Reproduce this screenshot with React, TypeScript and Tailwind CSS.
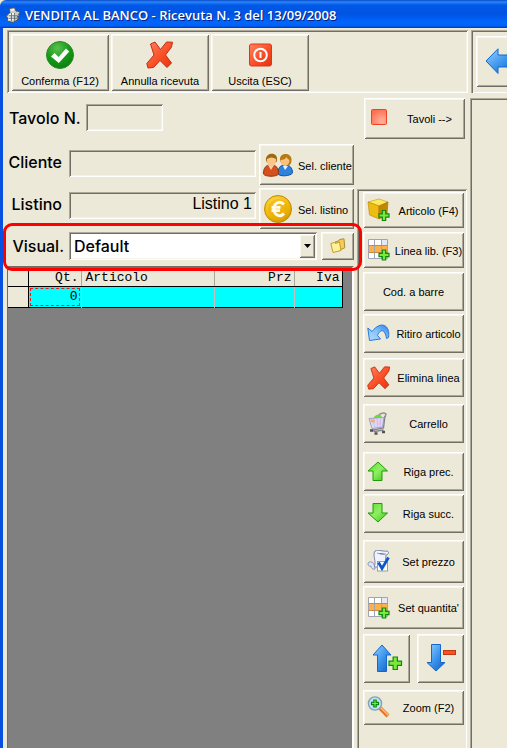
import type { ReactNode } from 'react'

const RAISED =
  'bg-[#ece9d8] shadow-[inset_1px_1px_0_#ffffff,inset_-1px_-1px_0_#716f64,inset_2px_2px_0_#f7f5ee,inset_-2px_-2px_0_#aca899]'
const SUNKEN =
  'shadow-[inset_1px_1px_0_#aca899,inset_-1px_-1px_0_#ffffff,inset_2px_2px_0_#716f64,inset_-2px_-2px_0_#f4f2e8]'
const SMALL = "font-['Liberation_Sans',sans-serif] text-[11px] leading-4"
const FIELD_LABEL = "font-['Inter','Liberation_Sans',sans-serif] text-[16px] leading-5 font-medium text-black"

function Gradients() {
  return (
    <svg className="absolute size-0" aria-hidden="true">
      <defs>
        <radialGradient id="green" cx="0.4" cy="0.25" r="0.8">
          <stop offset="0" stopColor="#5cc052" />
          <stop offset="0.55" stopColor="#169a16" />
          <stop offset="1" stopColor="#0a7d12" />
        </radialGradient>
        <linearGradient id="red" x1="0" y1="0" x2="1" y2="1">
          <stop offset="0" stopColor="#ff8460" />
          <stop offset="0.6" stopColor="#f84a22" />
          <stop offset="1" stopColor="#e03410" />
        </linearGradient>
        <linearGradient id="lime" x1="0" y1="0" x2="1" y2="1">
          <stop offset="0" stopColor="#5fdc30" />
          <stop offset="0.5" stopColor="#8cf060" />
          <stop offset="1" stopColor="#38c010" />
        </linearGradient>
        <linearGradient id="blue" x1="0" y1="0" x2="1" y2="1">
          <stop offset="0" stopColor="#9bd4ff" />
          <stop offset="0.5" stopColor="#3d96ee" />
          <stop offset="1" stopColor="#1258c0" />
        </linearGradient>
        <linearGradient id="sky" x1="0" y1="1" x2="1" y2="0">
          <stop offset="0" stopColor="#b4dcff" />
          <stop offset="0.5" stopColor="#84c4fc" />
          <stop offset="1" stopColor="#2c80e4" />
        </linearGradient>
        <radialGradient id="gold" cx="0.4" cy="0.3" r="0.8">
          <stop offset="0" stopColor="#ffdc50" />
          <stop offset="0.6" stopColor="#f2b90c" />
          <stop offset="1" stopColor="#c88a00" />
        </radialGradient>
        <radialGradient id="square" cx="0.7" cy="0.8" r="0.9">
          <stop offset="0" stopColor="#ffb49a" />
          <stop offset="1" stopColor="#ff6a4c" />
        </radialGradient>
      </defs>
    </svg>
  )
}

function Plus({ x, y, s = 10 }: { x: number; y: number; s?: number }) {
  const a = s * 0.33
  const b = s * 0.67
  return (
    <path
      transform={`translate(${x} ${y})`}
      d={`M${a} 0H${b}V${a}H${s}V${b}H${b}V${s}H${a}V${b}H0V${a}H${a}Z`}
      fill="#7ce83c"
      stroke="#0c8a10"
      strokeWidth="1.2"
    />
  )
}

function CheckIcon() {
  return (
    <svg width="28" height="28" viewBox="0 0 28 28">
      <circle cx="14" cy="14" r="13.5" fill="url(#green)" stroke="#2f8a2c" />
      <path d="M5 15.5 8.5 12l4 4L20 7.5l3.3 3L12.8 22Z" fill="#fff" />
    </svg>
  )
}

function CrossIcon({ size }: { size: number }) {
  return (
    <svg width={size} height={size} viewBox="0 0 28 28">
      <path
        d="M4.500 3 9 1l5.500 7.500L20.500 1 26.500 1.200 25.500 6 19.500 14l6 8-4.500 4.500-7-7L7.500 26.500 2 27 .8 22.500 8 14Z"
        fill="url(#red)"
        stroke="#c42c10"
        strokeLinejoin="round"
      />
    </svg>
  )
}

function PowerIcon() {
  return (
    <svg width="28" height="28" viewBox="0 0 28 28">
      <rect x="3.5" y="3" width="22" height="22" rx="2" fill="url(#red)" stroke="#d8391c" />
      <circle cx="14.5" cy="14" r="6.3" fill="none" stroke="#fff" strokeWidth="2" />
      <path d="M14.5 11v6" stroke="#fff" strokeWidth="2" />
    </svg>
  )
}

function UsersIcon() {
  return (
    <svg width="30" height="24" viewBox="0 0 30 24">
      <path d="M15 21c0-6 2-9 7-9s7.500 3 7.500 8c-2 3-12 4-14.500 1Z" fill="#2f82dc" stroke="#0d4f9e" />
      <path d="m20 13 2 4 3-4Z" fill="#e8f3ff" />
      <path d="M17 7c-1-8 12-8 11.500 0 0 3-1 4.500-3 5.500h-4c-3-1-4-3-4.500-5.500Z" fill="#b87a10" />
      <path d="M17.500 7c3 0 5-1 6-3 1 2 2 2 3 3 0 3-2 6-4.500 6s-4.500-3-4.500-6Z" fill="#fbc180" />
      <path d="M.5 21c0-6 2-9 7.500-9s7.500 3 7.500 9c-2 3-13 3-15 0Z" fill="#d4501c" stroke="#9a3408" />
      <path d="m5 12 3 5 3-5Z" fill="#fbd0a0" />
      <path d="M3 7.500c-1-8.500 12-9 11-1 0 1 0 2-1 3H4Z" fill="#9a6a10" />
      <path d="M4 6c3-2 6-2 9 0 .5 4-2 7.500-4.500 7.500S3.500 10 4 6Z" fill="#fdc58a" />
    </svg>
  )
}

function EuroIcon() {
  return (
    <svg width="28" height="28" viewBox="0 0 28 28">
      <circle cx="14" cy="14" r="13.500" fill="url(#gold)" stroke="#c48c00" />
      <circle cx="14" cy="14" r="10" fill="#e8a800" opacity="0.5" />
      <path
        d="M20 9.500c-4-4.500-10-1.500-10 4.500s6 9 10 4.500M7.500 12.300h9M7.500 15.700h8.500"
        fill="none"
        stroke="#fffbe8"
        strokeWidth="2.800"
      />
    </svg>
  )
}

function FolderIcon() {
  return (
    <svg width="16" height="16" viewBox="0 0 16 16">
      <path d="M5 4 8.500 3l1-1.500L14 .8l.8 9L7 13Z" fill="#f4cc58" stroke="#b08c30" />
      <path d="M.8 5.500 4.500 4.500l1 1 4-1.500L11 12.500 3 14.500Z" fill="#fff09a" stroke="#c89c2c" />
    </svg>
  )
}

function SquareIcon() {
  return (
    <svg width="24" height="24" viewBox="0 0 24 24">
      <rect x="3.500" y="2.500" width="15" height="15" rx="1" fill="url(#square)" stroke="#ee4426" />
    </svg>
  )
}

function BoxIcon() {
  return (
    <svg width="24" height="24" viewBox="0 0 24 24">
      <path d="M1 4 12 1l9 3-9 4Z" fill="#ffe860" stroke="#c89a00" strokeWidth="0.600" />
      <path d="M1 4l11 4v13L2.500 17Z" fill="#eebc10" stroke="#b88600" strokeWidth="0.600" />
      <path d="M21 4 12 8v13l8-4Z" fill="#c08800" stroke="#a87600" strokeWidth="0.600" />
      <Plus x={12} y={12.5} />
    </svg>
  )
}

function GridIcon() {
  return (
    <svg width="24" height="24" viewBox="0 0 24 24">
      <rect x="1.500" y="1.500" width="19" height="19" fill="#fff" />
      <rect x="14" y="1.500" width="6.500" height="19" fill="#e4e8f8" />
      <rect x="1.500" y="7.500" width="19" height="6.500" fill="#fbb24a" />
      <path d="M1.500 1.500h19v19h-19ZM7.500 1.500v19M14.500 1.500v19" fill="none" stroke="#a0a4b4" />
      <path d="M1.500 7.500h19M1.500 14.500h19" stroke="#c48c4c" />
      <Plus x={12} y={12} />
    </svg>
  )
}

function UndoIcon() {
  return (
    <svg width="24" height="24" viewBox="0 0 24 24">
      <path
        d="M.8 6 2.500 18.500 13.500 17 10.500 13.500C13 7 18 6.500 19.500 16.500L21.500 15.500C23.500 3 14-2 5 9.500Z"
        fill="url(#sky)"
        stroke="#2878d8"
        strokeLinejoin="round"
      />
    </svg>
  )
}

function CartIcon() {
  return (
    <svg width="24" height="24" viewBox="0 0 24 24">
      <path d="M7 5c3-4 8-3 8 1v3H7Z" fill="#6cd848" />
      <path d="M12 3c1-2 5-2.500 7-1l-1 3" fill="none" stroke="#909098" strokeWidth="1.500" />
      <path d="M2 6.500 17 5.500 15.500 15 5 16.500Z" fill="#dcdcfa" stroke="#a0a0d0" />
      <path d="M3 7.500h5v3H4Z" fill="#f4b078" />
      <path d="M10 8h4v5h-4Z" fill="#f4c8e0" />
      <path d="m6 6.500 2 9.500M10 6l.5 9.500M14 6l-1 9" stroke="#b8b4e8" strokeWidth="0.700" />
      <path d="M18 4 16.500 16l-11 2 2 1.500 9-1.500" fill="none" stroke="#84848c" strokeWidth="1.300" />
      <path d="M3 18.500h3M7.500 21.500h3M15 20h3" stroke="#505058" strokeWidth="2.600" />
    </svg>
  )
}

function GreenArrow({ down }: { down?: boolean }) {
  return (
    <svg width="24" height="24" viewBox="0 0 24 24">
      <path
        d={down ? 'M6 1.500h9v9.500h5.500L11 20 1 11h5Z' : 'M6 20.500h9V11h5.500L11 2 1 11h5Z'}
        fill="url(#lime)"
        stroke="#1c9c08"
      />
    </svg>
  )
}

function PriceIcon() {
  return (
    <svg width="24" height="24" viewBox="0 0 24 24">
      <path d="M8 1c3-2 9 1 12 0 3 1 1 4-1 4l-1 12H7C10 11 5 6 8 1Z" fill="#f0f2fc" stroke="#7c84a4" />
      <path d="M1 13c2-2 5-1 6 1l1 5c-2 1-4-1-4-3-2 1-3-1-3-3Z" fill="#dfe4f8" stroke="#8890b4" />
      <path d="M10 3c3 1 6 2 9 1" stroke="#a0a8c8" />
      <rect x="10.500" y="11.500" width="10" height="9.500" fill="#fff" stroke="#a09c98" />
      <path d="m11.500 12.500 3.500 6 6.500-11" fill="none" stroke="#0c58c8" strokeWidth="2.800" />
    </svg>
  )
}

function QtyUpIcon() {
  return (
    <svg width="32" height="32" viewBox="0 0 32 32">
      <path d="M6.500 28.500V12H2l9-10 9 10h-4.500v16.500Z" fill="url(#blue)" stroke="#1468cc" />
      <Plus x={18} y={14} s={12.5} />
    </svg>
  )
}

function QtyDownIcon() {
  return (
    <svg width="32" height="32" viewBox="0 0 32 32">
      <path d="M6.500 1.500V19.500H2L11 28l9-8.500h-4.500V1.500Z" fill="url(#blue)" stroke="#1468cc" />
      <rect x="18.500" y="7.500" width="12" height="4" fill="#fb5020" stroke="#c03810" />
    </svg>
  )
}

function ZoomIcon() {
  return (
    <svg width="24" height="24" viewBox="0 0 24 24">
      <path d="m13 12 8 8" stroke="#e87424" strokeWidth="4" />
      <path d="m13.500 11.500 8 8" stroke="#ffc490" strokeWidth="1.300" />
      <circle cx="8" cy="7.500" r="6.600" fill="#bce4fc" stroke="#88a0b4" strokeWidth="1.400" />
      <Plus x={4.5} y={4} s={7} />
    </svg>
  )
}

function BackArrowIcon() {
  return (
    <svg width="34" height="28" viewBox="0 0 34 28" className="shrink-0">
      <path d="M1 13 13 .8V7h20v12H13v6.500Z" fill="url(#blue)" stroke="#1468cc" />
    </svg>
  )
}

function RegisterIcon() {
  return (
    <svg width="16" height="16" viewBox="0 0 16 16">
      <path d="M4 1.500 9.500.5 11 4l3.500.5.5 2-1.500.5 1 1.500-2 1 1 2-2 2L8 15.500 2 14l1-3-2-1 2-3 2-1Z" fill="#c4ccc8" stroke="#48545c" />
      <path d="M5.500 2.500 9 2l.5 1.500-3.500.5Z" fill="#f4f8f4" />
      <path d="M4 7.500h2M3.500 10h2M3.500 12.500h2M7 7h2M7 10h1.500M7 12.500h1.500" stroke="#fff" strokeWidth="1.500" />
      <path d="M6.500 6v8M9.500 6v8M4 8.800h9M4 11.300h9" stroke="#5c6870" strokeWidth="0.800" />
    </svg>
  )
}

function TopButton({ icon, children }: { icon: ReactNode; children: ReactNode }) {
  return (
    <button type="button" className={`flex h-[57px] w-[98px] flex-col items-center gap-1 pt-[7px] ${SMALL} ${RAISED}`}>
      {icon}
      {children}
    </button>
  )
}

function ToolButton({ icon, className, children }: { icon?: ReactNode; className: string; children: ReactNode }) {
  return (
    <button type="button" className={`flex w-[101px] shrink-0 items-center pl-1 whitespace-nowrap ${SMALL} ${RAISED} ${className}`}>
      {icon}
      <span className={icon ? 'flex-1 pt-px pl-[2px] text-center' : 'flex-1 pr-1 text-center'}>{children}</span>
    </button>
  )
}

function SelButton({ icon, children }: { icon: ReactNode; children: ReactNode }) {
  return (
    <button type="button" className={`ml-[3px] h-[41px] w-[95px] shrink-0 p-[2px] ${SMALL} ${RAISED}`}>
      <span className="flex items-center gap-[5px] pl-[2px] whitespace-nowrap">
        <span className="flex w-[30px] shrink-0 justify-center">{icon}</span>
        <span className="pt-[2px]">{children}</span>
      </span>
    </button>
  )
}

const columns = [
  { name: 'Qt.', className: 'w-[53px] text-right' },
  { name: 'Articolo', className: 'w-[133px] text-left' },
  { name: 'Prz', className: 'w-[80px] text-right' },
  { name: 'Iva', className: 'w-[48px] text-right' },
]

export default function App() {
  return (
    <div className="flex min-h-screen flex-col overflow-hidden bg-[#ece9d8] text-black">
      <Gradients />
      <header className="flex h-7 items-center gap-1 rounded-tl-md bg-[linear-gradient(#0a48c8_0%,#2a86f8_7%,#0058e6_18%,#0054e3_50%,#0066ff_82%,#0062f5_92%,#0038b8_100%)] pt-[2px] pl-[5px]">
        <RegisterIcon />
        <h1 className="font-['Open_Sans',sans-serif] text-[13px] leading-4 font-semibold whitespace-nowrap text-white [text-shadow:1px_1px_0_#0a1f7a]">
          VENDITA AL BANCO - Ricevuta N. 3 del 13/09/2008
        </h1>
      </header>

      <div className="flex flex-1 border-l-3 border-[#0a50e0] pt-[2px]">
        <main className="flex w-[465px] shrink-0 flex-col pl-1">
          <div className={`flex h-[63px] gap-[2px] pt-1 pl-1 ${SUNKEN}`}>
            <TopButton icon={<CheckIcon />}>Conferma (F12)</TopButton>
            <TopButton icon={<CrossIcon size={28} />}>Annulla ricevuta</TopButton>
            <TopButton icon={<PowerIcon />}>Uscita (ESC)</TopButton>
          </div>

          <div className="flex flex-1 pt-1">
            <section className="flex min-w-0 flex-1 flex-col gap-[3px] pr-[3px]">
              <div className="flex h-11 items-start pt-[7px]">
                <label htmlFor="tavolo" className={`w-[79px] shrink-0 pt-1 pl-[2px] whitespace-nowrap ${FIELD_LABEL}`}>
                  Tavolo N.
                </label>
                <input id="tavolo" className={`h-[27px] w-[77px] px-1 ${SUNKEN}`} />
              </div>
              <div className="flex items-start">
                <label htmlFor="cliente" className={`mr-[7px] w-[55px] shrink-0 pt-2 text-right ${FIELD_LABEL}`}>
                  Cliente
                </label>
                <input id="cliente" className={`mt-[6px] h-[27px] min-w-0 flex-1 px-1 ${SUNKEN}`} />
                <SelButton icon={<UsersIcon />}>Sel. cliente</SelButton>
              </div>
              <div className="flex items-start">
                <label htmlFor="listino" className={`mr-[7px] w-[55px] shrink-0 pt-[6px] text-right ${FIELD_LABEL}`}>
                  Listino
                </label>
                <input
                  id="listino"
                  defaultValue="Listino 1"
                  className={`mt-1 h-[27px] min-w-0 flex-1 px-1 pb-[3px] text-right font-['Liberation_Sans',sans-serif] text-[16px] leading-5 ${SUNKEN}`}
                />
                <SelButton icon={<EuroIcon />}>Sel. listino</SelButton>
              </div>
              <div className="relative flex h-7 items-center">
                <label htmlFor="visual" className={`mr-[5px] w-[57px] shrink-0 text-right ${FIELD_LABEL}`}>
                  Visual.
                </label>
                <div className="relative h-7 min-w-0 flex-1">
                  <select
                    id="visual"
                    className={`h-7 w-full appearance-none bg-white pl-[5px] font-['Inter','Liberation_Sans',sans-serif] text-[16px] leading-5 font-medium ${SUNKEN}`}
                  >
                    <option>Default</option>
                  </select>
                  <span className={`pointer-events-none absolute inset-y-[2px] right-[2px] flex w-4 items-center justify-center ${RAISED}`}>
                    <svg width="7" height="4" viewBox="0 0 7 4">
                      <path d="M0 0h7L3.500 4Z" />
                    </svg>
                  </span>
                </div>
                <button type="button" aria-label="Apri" className={`ml-1 flex h-7 w-[33px] items-center justify-center ${RAISED}`}>
                  <FolderIcon />
                </button>
                <div className="pointer-events-none absolute -top-[9px] -right-2 -bottom-[11px] -left-1 z-10 rounded-[9px] border-3 border-[#fe0000]" />
              </div>

              <div className="mt-[3px] flex-1 border-t-2 border-r-2 border-l border-t-[#716f64] border-r-white border-l-[#716f64] bg-[#808080] pt-[2px]">
                <table className="w-[334px] table-fixed border-collapse border-r border-b border-black font-['Liberation_Mono',monospace] text-[13px] leading-4">
                  <thead>
                    <tr className="h-4 bg-[#ece9d8]">
                      <th className="w-[20px] border-r border-b border-black" />
                      {columns.map((c) => (
                        <th key={c.name} className={`border-r border-b border-r-[#aca899] border-b-black py-0 pr-[2px] pl-1 font-normal last:border-r-black ${c.className}`}>
                          {c.name}
                        </th>
                      ))}
                    </tr>
                  </thead>
                  <tbody>
                    <tr className="h-5 bg-[#00ffff]">
                      <td className="border-r border-black bg-[#ece9d8]" />
                      <td className="border-r border-r-[#c0c0c0] p-px text-right">
                        <div className="h-[18px] border border-dashed border-[#f01818] pr-px">0</div>
                      </td>
                      <td className="border-r border-r-[#c0c0c0]" />
                      <td className="border-r border-r-[#c0c0c0]" />
                      <td />
                    </tr>
                  </tbody>
                </table>
              </div>
            </section>

            <aside className="flex w-[111px] shrink-0 flex-col">
              <ToolButton icon={<SquareIcon />} className="mt-px ml-[7px] h-[41px]">Tavoli --&gt;</ToolButton>
              <nav className="mt-[50px] flex w-[110px] flex-1 flex-col pt-[3px] pb-[23px] pl-[6px] shadow-[inset_1px_1px_0_#aca899,inset_-1px_0_0_#ffffff,inset_2px_2px_0_#716f64]">
                <ToolButton icon={<BoxIcon />} className="h-9">Articolo (F4)</ToolButton>
                <ToolButton icon={<GridIcon />} className="mt-1 h-9">Linea lib. (F3)</ToolButton>
                <ToolButton className="mt-1 h-[39px]">Cod. a barre</ToolButton>
                <ToolButton icon={<UndoIcon />} className="mt-[3px] h-[39px]">Ritiro articolo</ToolButton>
                <ToolButton icon={<CrossIcon size={24} />} className="mt-[5px] h-[39px]">Elimina linea</ToolButton>
                <ToolButton icon={<CartIcon />} className="mt-[7px] h-[39px]">Carrello</ToolButton>
                <ToolButton icon={<GreenArrow />} className="mt-[9px] h-[39px]">Riga prec.</ToolButton>
                <ToolButton icon={<GreenArrow down />} className="mt-[3px] h-[39px]">Riga succ.</ToolButton>
                <ToolButton icon={<PriceIcon />} className="mt-[7px] h-[43px]">Set prezzo</ToolButton>
                <ToolButton icon={<GridIcon />} className="mt-[3px] h-[43px]">Set quantita'</ToolButton>
                <div className="mt-[5px] flex gap-[7px]">
                  <button type="button" aria-label="Aumenta" className={`flex h-[49px] w-[47px] items-center justify-center ${RAISED}`}>
                    <QtyUpIcon />
                  </button>
                  <button type="button" aria-label="Diminuisci" className={`flex h-[49px] w-[47px] items-center justify-center ${RAISED}`}>
                    <QtyDownIcon />
                  </button>
                </div>
                <ToolButton icon={<ZoomIcon />} className="mt-[7px] h-[35px]">Zoom (F2)</ToolButton>
              </nav>
            </aside>
          </div>
        </main>

        <section className="flex min-w-0 flex-1 flex-col overflow-hidden pl-[2px]">
          <div className="ml-px h-[63px] overflow-hidden pt-[6px] pl-[5px] shadow-[inset_1px_1px_0_#aca899,inset_2px_2px_0_#716f64,inset_0_-1px_0_#ffffff]">
            <button type="button" aria-label="Indietro" className={`flex h-[51px] w-[60px] items-center pl-[9px] ${RAISED}`}>
              <BackArrowIcon />
            </button>
          </div>
          <div className="mt-[5px] flex-1 shadow-[inset_1px_1px_0_#aca899,inset_2px_2px_0_#716f64]" />
        </section>
      </div>
    </div>
  )
}
